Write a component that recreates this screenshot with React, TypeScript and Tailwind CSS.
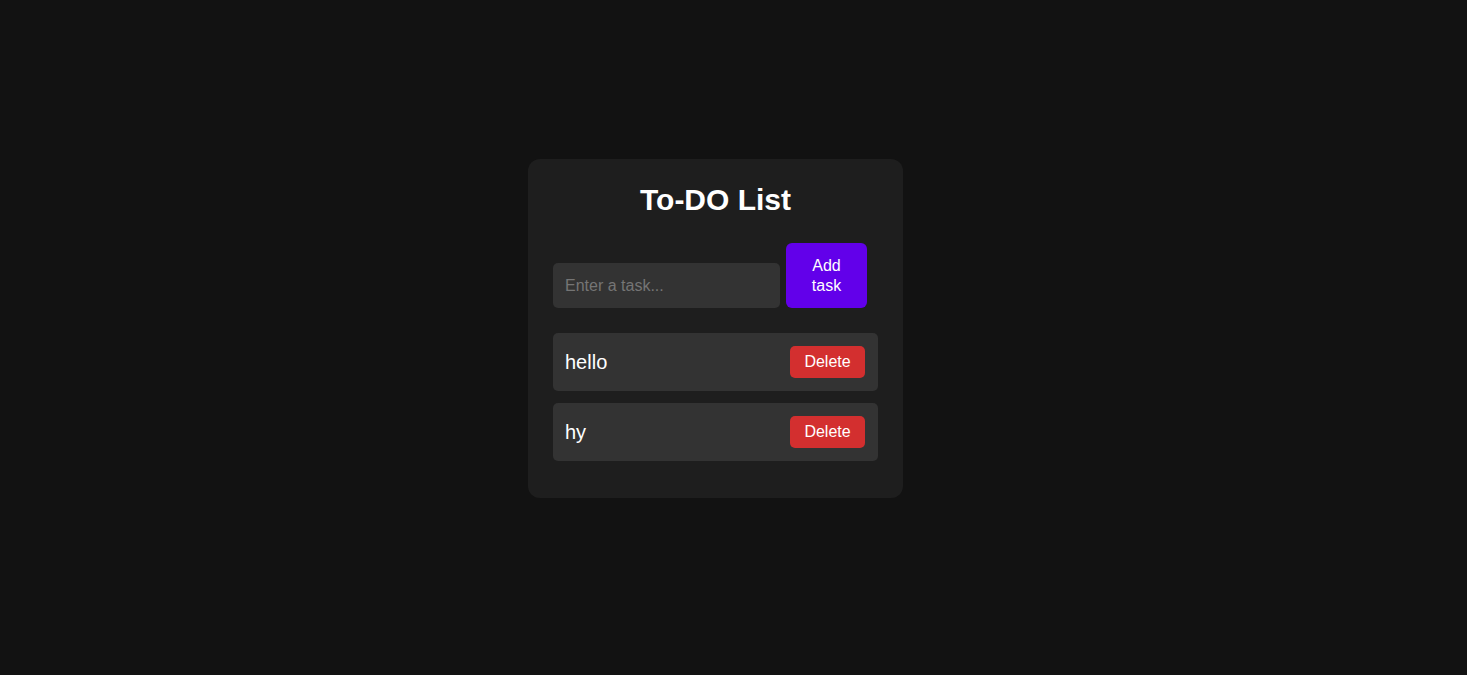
import { useState } from 'react'

export default function App() {
  const [task, setTask] = useState('')
  const [tasks, setTasks] = useState<string[]>(['hello', 'hy'])

  const addTask = () => {
    if (!task.trim()) return
    setTasks([...tasks, task.trim()])
    setTask('')
  }

  return (
    <div
      className="min-h-screen bg-[#121212] flex justify-center pt-[159px] pr-[36px] text-white"
      style={{ fontFamily: '"Liberation Sans", Arial, sans-serif' }}
    >
      <div className="w-[375px] self-start rounded-xl bg-[#1e1e1e] px-[25px] pt-[23px] pb-[37px]">
        <h1 className="text-center text-[30px] font-bold leading-[35px]">To-DO List</h1>

        {/* Input row */}
        <div className="mt-[26px] flex items-end gap-[6px]">
          <input
            type="text"
            value={task}
            onChange={(e) => setTask(e.target.value)}
            placeholder="Enter a task..."
            className="w-[227px] h-[45px] rounded-[5px] bg-[#333333] px-[12px] text-[16px] text-white placeholder:text-[#757575] outline-none"
          />
          <button
            onClick={addTask}
            className="w-[81px] h-[65px] rounded-[6px] bg-[#6200ea] text-[16px] leading-[20px] text-white"
          >
            Add
            <br />
            task
          </button>
        </div>

        {/* Tasks */}
        <ul className="mt-[25px] flex flex-col gap-[12px]">
          {tasks.map((t, i) => (
            <li
              key={i}
              className="h-[58px] flex items-center justify-between rounded-[5px] bg-[#333333] pl-[12px] pr-[13px]"
            >
              <span className="text-[20px]">{t}</span>
              <button
                onClick={() => setTasks(tasks.filter((_, j) => j !== i))}
                className="w-[75px] h-[32px] rounded-[5px] bg-[#d32f2f] text-[16px] text-white"
              >
                Delete
              </button>
            </li>
          ))}
        </ul>
      </div>
    </div>
  )
}
